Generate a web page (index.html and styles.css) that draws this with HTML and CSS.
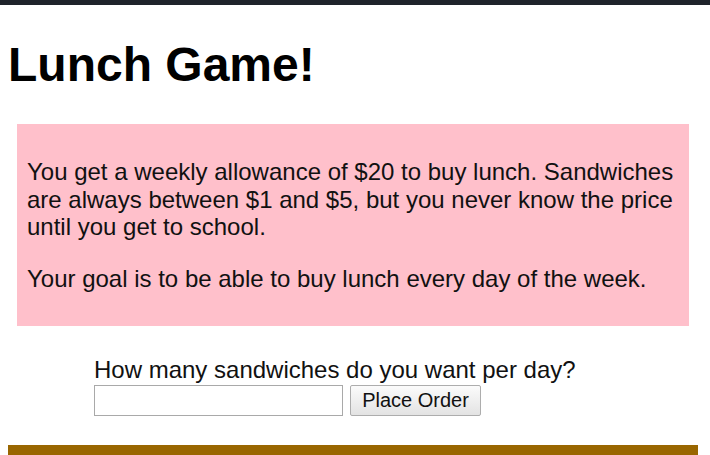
FILE: index.html
```html
<!DOCTYPE html>
<html>
<head>
<meta charset="utf-8">
<title>Lunch Game!</title>
<link rel="stylesheet" href="styles.css">
</head>
<body>
<div class="topbar"></div>
<main class="page">
  <h1 class="title">Lunch Game!</h1>
  <section class="intro">
    <p>You get a weekly allowance of $20 to buy lunch. Sandwiches are always between $1 and $5, but you never know the price until you get to school.</p>
    <p>Your goal is to be able to buy lunch every day of the week.</p>
  </section>
  <form class="order">
    <label class="order-label" for="qty">How many sandwiches do you want per day?</label>
    <div class="order-row">
      <input class="order-input" id="qty" type="text">
      <button class="order-btn" type="button">Place Order</button>
    </div>
  </form>
  <div class="footbar"></div>
</main>
</body>
</html>
```

FILE: styles.css
```css
html, body {
  margin: 0;
  padding: 0;
  background: #ffffff;
}

body {
  font-family: "Liberation Sans", Arial, sans-serif;
  font-size: 24px;
  color: #111;
}

.topbar {
  height: 5px;
  background: #1f232b;
}

.page {
  width: 690px;
  margin-left: 8px;
}

.title {
  margin: 32px 0 32px 0;
  font-size: 48px;
  font-weight: bold;
  line-height: 55px;
  color: #000;
}

.intro {
  margin: 0 9px;
  padding: 10px 10px;
  background: #ffc0cb;
}

.intro p {
  margin: 24px 0;
  line-height: 27.5px;
}

.order {
  margin: 30px 0 0 86px;
  display: flex;
  flex-direction: column;
}

.order-label {
  line-height: 27.5px;
}

.order-row {
  display: flex;
  gap: 7px;
  margin-top: 1px;
}

.order-input {
  box-sizing: border-box;
  width: 249px;
  height: 31px;
  margin: 0;
  border: 1px solid #a9a9a9;
  background: #fff;
  font-family: inherit;
  font-size: 20px;
  padding: 1px 3px;
}

.order-btn {
  box-sizing: border-box;
  width: 131px;
  height: 31px;
  margin: 0;
  padding: 0;
  border: 1px solid #adadad;
  border-radius: 2px;
  background: linear-gradient(#fbfbfb, #e3e3e3);
  font-family: inherit;
  font-size: 20px;
  color: #111;
}

.footbar {
  margin-top: 29px;
  height: 12px;
  background: #996600;
}
```
